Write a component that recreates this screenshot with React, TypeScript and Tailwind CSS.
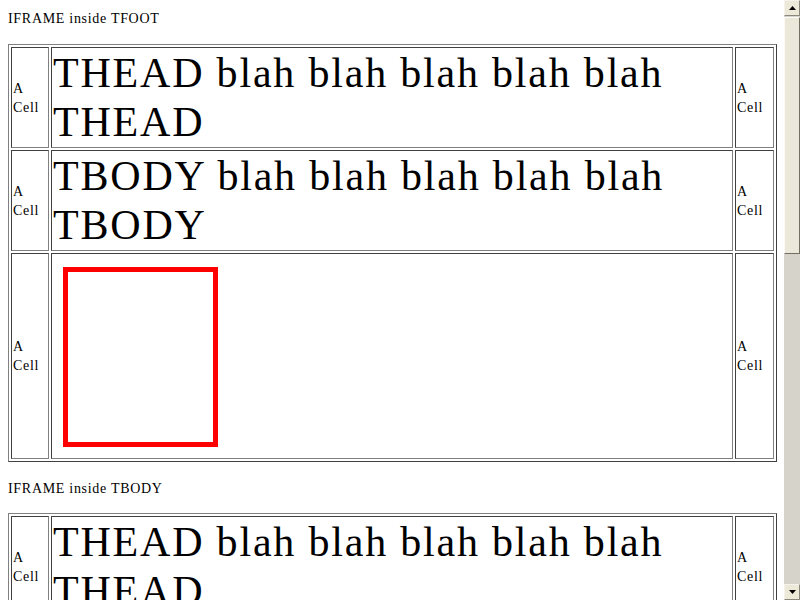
const serif = { fontFamily: '"Liberation Serif", "Times New Roman", serif' }

// Narrow side cell: "A" over "Cell", vertically centred
const SideCell = () => (
  <div className="flex flex-col justify-center border border-t-[#404040] border-l-[#404040] border-b-[#808080] border-r-[#808080] p-px text-[14px] leading-[19px] tracking-[0.7px] text-black">
    <span>A</span>
    <span>Cell</span>
  </div>
)

const BigCell = ({ label }: { label: string }) => (
  <div className="border border-t-[#404040] border-l-[#404040] border-b-[#808080] border-r-[#808080] p-px text-[42px] leading-[48.5px] tracking-[1.8px] text-black">
    {label} blah blah blah blah blah {label}
  </div>
)

const FrameCell = () => (
  <div className="border border-t-[#404040] border-l-[#404040] border-b-[#808080] border-r-[#808080] p-px">
    <div className="ml-[10px] mt-[12px] mb-[10px] h-[180px] w-[155px] border-[5px] border-[#ff0000] bg-white" />
  </div>
)

const Section = ({ title, gap }: { title: string; gap: string }) => (
  <div>
    <p className="text-[14px] leading-[19px] tracking-[0.7px] text-black">{title}</p>
    <div className={`${gap} w-[769px] border border-t-[#808080] border-l-[#808080] border-b-[#404040] border-r-[#404040] p-[2px]`}>
      <div className="grid grid-cols-[38px_682px_39px] gap-[2px]">
        <SideCell />
        <BigCell label="THEAD" />
        <SideCell />
        <SideCell />
        <BigCell label="TBODY" />
        <SideCell />
        <SideCell />
        <FrameCell />
        <SideCell />
      </div>
    </div>
  </div>
)

const Arrow = ({ up }: { up?: boolean }) => (
  <div className="flex h-[16px] w-[16px] items-center justify-center border border-t-[#f4f2ea] border-l-[#f4f2ea] border-b-[#8a877c] border-r-[#8a877c] bg-[#ece9d8]">
    <svg width="7" height="4" viewBox="0 0 7 4">
      {up ? <path d="M3.5 0 L7 4 L0 4 Z" fill="#000" /> : <path d="M0 0 L7 0 L3.5 4 Z" fill="#000" />}
    </svg>
  </div>
)

const Scrollbar = () => (
  <div className="flex h-[600px] w-[16px] shrink-0 flex-col bg-[#d6d3ca]">
    <Arrow up />
    <div className="mt-px h-[237px] border border-t-[#fbfaf6] border-l-[#fbfaf6] border-b-[#716f64] border-r-[#716f64] bg-[#ebe8d9]" />
    <div className="flex-1" />
    <Arrow />
  </div>
)

export default function App() {
  return (
    <div className="flex h-[600px] w-[800px] overflow-hidden bg-white" style={serif}>
      <div className="flex-1 overflow-hidden px-[8px] pt-[9px]">
        <Section title="IFRAME inside TFOOT" gap="mt-[16px]" />
        <div className="mt-[17px]">
          <Section title="IFRAME inside TBODY" gap="mt-[15px]" />
        </div>
      </div>
      <Scrollbar />
    </div>
  )
}
